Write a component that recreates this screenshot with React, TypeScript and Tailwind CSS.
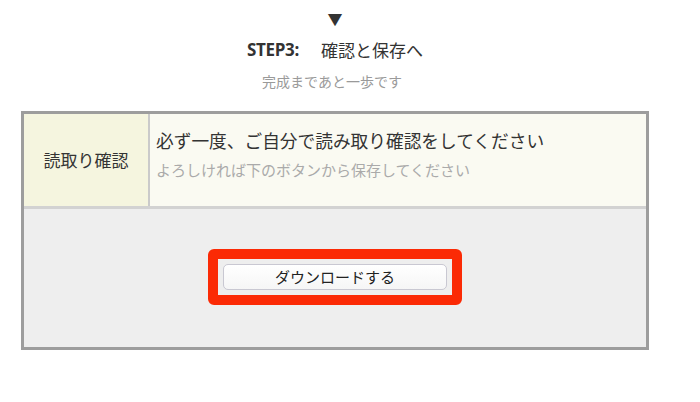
const jp = '"Noto Sans CJK JP", "Noto Sans", sans-serif';

export default function App() {
  return (
    <div className="w-[670px] bg-white text-[#333]" style={{ fontFamily: jp }}>
      {/* 見出し */}
      <div className="flex h-[36px] items-center justify-center text-[15px] leading-none text-[#333]">
        ▼
      </div>
      <div className="flex h-[28px] items-center justify-center">
        <span className="font-['Open_Sans',sans-serif] text-[17px] font-bold tracking-[-0.3px] text-[#333]">
          STEP3:
        </span>
        <span className="ml-[22px] text-[17px]">確認と保存へ</span>
      </div>
      <p className="mt-[5px] h-[24px] pr-[6px] text-center text-[14px] leading-[24px] text-[#9a9a9a]">
        完成まであと一歩です
      </p>

      {/* 確認ボックス */}
      <div className="mx-[21px] mt-[18px] border-[3px] border-[#9d9d9d] bg-[#eeeeee]">
        <div className="flex h-[95px] border-b-[3px] border-[#d2d2d2]">
          <div className="flex w-[124px] shrink-0 items-center justify-center bg-[#f5f5df] text-[17px]">
            読取り確認
          </div>
          <div className="w-[2px] bg-[#cacaca]" />
          <div className="flex-1 bg-[#fafaf2] pl-[6px] pt-[13px]">
            <p className="text-[17.7px] leading-[26px] text-[#333]">
              必ず一度、ご自分で読み取り確認をしてください
            </p>
            <p className="mt-[6px] text-[15px] leading-[22px] text-[#aaaaaa]">
              よろしければ下のボタンから保存してください
            </p>
          </div>
        </div>
        <div className="flex justify-center pb-[42px] pt-[40px]">
          <div className="rounded-[6px] border-[10px] border-[#fb2a05] p-[5px]">
            <button className="flex h-[26px] w-[224px] items-center justify-center rounded-[5px] border border-[#c9c8d2] bg-gradient-to-b from-white to-[#f6f6f6] text-[15px] text-[#222]">
              ダウンロードする
            </button>
          </div>
        </div>
      </div>
    </div>
  );
}
